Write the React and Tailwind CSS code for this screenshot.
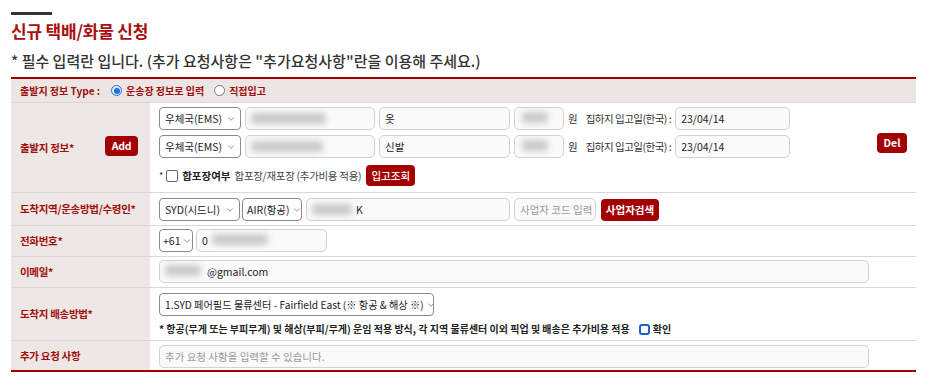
import React from 'react';
import { ChevronDown } from 'lucide-react';

const FONT = "font-['Noto_Sans_CJK_KR','Noto_Sans',sans-serif]";

const Blur = ({ w }) => (
  <span className="inline-block h-[11px] rounded-sm bg-[#c9c9c9] blur-[3px]" style={{ width: w }} />
);

const Select = ({ w, children, className = 'pl-[5px] pr-[4px] text-[10.5px]' }) => (
  <div className={`flex h-[23px] shrink-0 items-center justify-between overflow-hidden whitespace-nowrap rounded-[4px] border border-[#8a8a8a] bg-white text-[#222] ${className} ${w}`}>
    <span>{children}</span>
    <ChevronDown size={10} strokeWidth={1.5} className="ml-[2px] shrink-0 text-[#555]" />
  </div>
);

const Field = ({ w, children, muted }) => (
  <div className={`flex h-[23px] shrink-0 items-center whitespace-nowrap rounded-[5px] border border-[#d2d2d2] bg-[#fafafa] px-[5px] text-[10.5px] ${muted ? 'text-[#999]' : 'text-[#222]'} ${w}`}>
    {children}
  </div>
);

const RedBtn = ({ children, className = '' }) => (
  <button className={`flex shrink-0 items-center justify-center whitespace-nowrap rounded-[4px] bg-[#a30000] text-[10.5px] font-bold text-white ${className}`}>
    {children}
  </button>
);

const Label = ({ children, extra }) => (
  <div className="flex w-[139px] shrink-0 items-center justify-between whitespace-nowrap bg-[#ede8e5] pl-[9px] text-[10.5px] font-bold tracking-[-0.3px] text-[#a00d0d]">
    <span>{children}</span>
    {extra}
  </div>
);

const Row = ({ label, children, extra, className = '', last }) => (
  <div className={`flex ${last ? '' : 'border-b border-[#d8d8d8]'}`}>
    <Label extra={extra}>{label}</Label>
    <div className={`flex-1 pl-[9px] ${className}`}>{children}</div>
  </div>
);

export default function App() {
  return (
    <div className={`${FONT} w-[936px] bg-white pl-[11px] pr-[20px] pt-[12px] text-[#333]`}>
      <div className="h-[3px] w-[41px] bg-[#333]" />
      <h1 className="mt-[4px] text-[17px] font-bold leading-[23px] tracking-[-0.2px] text-[#a80e0e]">신규 택배/화물 신청</h1>
      <p className="mt-[9px] text-[15px] font-medium leading-[20px] text-[#333]">
        * 필수 입력란 입니다. (추가 요청사항은 "추가요청사항"란을 이용해 주세요.)
      </p>

      <div className="mt-[6px] border-y-2 border-[#a30000]">
        {/* type row */}
        <div className="flex h-[24px] items-center border-b border-[#d8d8d8] bg-[#ebe6e3] pl-[9px] text-[10px] font-bold text-[#a00d0d]">
          <span>출발지 정보 Type :</span>
          <span className="ml-[11px] flex items-center">
            <span className="flex h-[11px] w-[11px] items-center justify-center rounded-full border border-[#1a73e8]">
              <span className="h-[6px] w-[6px] rounded-full bg-[#1a73e8]" />
            </span>
            <span className="ml-[4px]">운송장 정보로 입력</span>
          </span>
          <span className="ml-[10px] flex items-center">
            <span className="h-[11px] w-[11px] rounded-full border border-[#777] bg-white" />
            <span className="ml-[4px]">직접입고</span>
          </span>
        </div>

        {/* origin info */}
        <Row
          label="출발지 정보*"
          extra={<RedBtn className="mr-[12px] mt-[-4px] h-[20px] w-[33px]">Add</RedBtn>}
          className="flex items-center pb-[6px] pt-[4px]"
        >
          <div>
            <div className="flex flex-col gap-[5px]">
              {[['옷', 75], ['신발', 72]].map(([item, bw]) => (
                <div key={item} className="flex items-center gap-[4px]">
                  <Select w="w-[82px]">우체국(EMS)</Select>
                  <Field w="w-[130px]"><Blur w={bw} /></Field>
                  <Field w="w-[131px]">{item}</Field>
                  <Field w="w-[50px]"><span className="ml-[2px]"><Blur w={26} /></span></Field>
                  <span className="text-[10.5px] text-[#333]">원</span>
                  <span className="ml-[4px] whitespace-nowrap text-[10.5px] tracking-[-0.5px] text-[#333]">집하지 입고일(한국) :</span>
                  <Field w="w-[115px]">23/04/14</Field>
                </div>
              ))}
            </div>
            <div className="mt-[7px] flex items-center whitespace-nowrap text-[10.5px]">
              <span className="text-[9px]">*</span>
              <span className="ml-[3px] h-[12px] w-[12px] rounded-[2px] border border-[#666] bg-white" />
              <span className="ml-[4px] font-bold text-[#222]">합포장여부</span>
              <span className="ml-[4px] tracking-[-0.3px] text-[#444]">합포장/재포장 (추가비용 적용)</span>
              <RedBtn className="ml-[5px] h-[21px] w-[49px] !font-medium">입고조회</RedBtn>
            </div>
          </div>
          <RedBtn className="ml-auto mr-[9px] mt-[-8px] h-[20px] w-[30px]">Del</RedBtn>
        </Row>

        {/* destination */}
        <Row label="도착지역/운송방법/수령인*" className="pb-[4px] pt-[5px]">
          <div className="flex items-center">
            <Select w="w-[81px]">SYD(시드니)</Select>
            <div className="w-[2px]" />
            <Select w="w-[60px]" className="pl-[4px] pr-[3px] text-[10.5px]">AIR(항공)</Select>
            <div className="w-[4px]" />
            <Field w="w-[204px]">
              <Blur w={40} />
              <span className="ml-[4px]">K</span>
            </Field>
            <div className="w-[4px]" />
            <Field w="w-[82px]" muted>사업자 코드 입력</Field>
            <RedBtn className="ml-[5px] h-[22px] w-[58px]">사업자검색</RedBtn>
          </div>
        </Row>

        {/* phone */}
        <Row label="전화번호*" className="pb-[4px] pt-[3px]">
          <div className="flex items-center gap-[3px]">
            <Select w="w-[34px]" className="pl-[3px] pr-[2px] text-[10.5px]">+61</Select>
            <Field w="w-[131px]">
              0<span className="ml-[4px]"><Blur w={56} /></span>
            </Field>
          </div>
        </Row>

        {/* email */}
        <Row label="이메일*" className="pb-[4px] pt-[3px]">
          <Field w="w-[710px]">
            <span className="mr-[6px]"><Blur w={36} /></span>@gmail.com
          </Field>
        </Row>

        {/* delivery */}
        <Row label="도착지 배송방법*" className="pb-[4px] pt-[5px]">
          <Select w="w-[275px]" className="pl-[5px] pr-[4px] text-[10.2px]">
            1.SYD 페어필드 물류센터 - Fairfield East (※ 항공 &amp; 해상 ※)
          </Select>
          <div className="mt-[6px] flex h-[14px] items-center whitespace-nowrap text-[10px] font-bold leading-[14px] text-[#222]">
            <span>* 항공(무게 또는 부피무게) 및 해상(부피/무게) 운임 적용 방식, 각 지역 물류센터 이외 픽업 및 배송은 추가비용 적용</span>
            <span className="ml-[9px] h-[11px] w-[11px] rounded-[3px] border-2 border-[#1a5fd0] bg-white" />
            <span className="ml-[3px]">확인</span>
          </div>
        </Row>

        {/* request */}
        <Row label="추가 요청 사항" className="pb-[2px] pt-[4px]" last>
          <Field w="w-[710px]" muted>추가 요청 사항을 입력할 수 있습니다.</Field>
        </Row>
      </div>
    </div>
  );
}
